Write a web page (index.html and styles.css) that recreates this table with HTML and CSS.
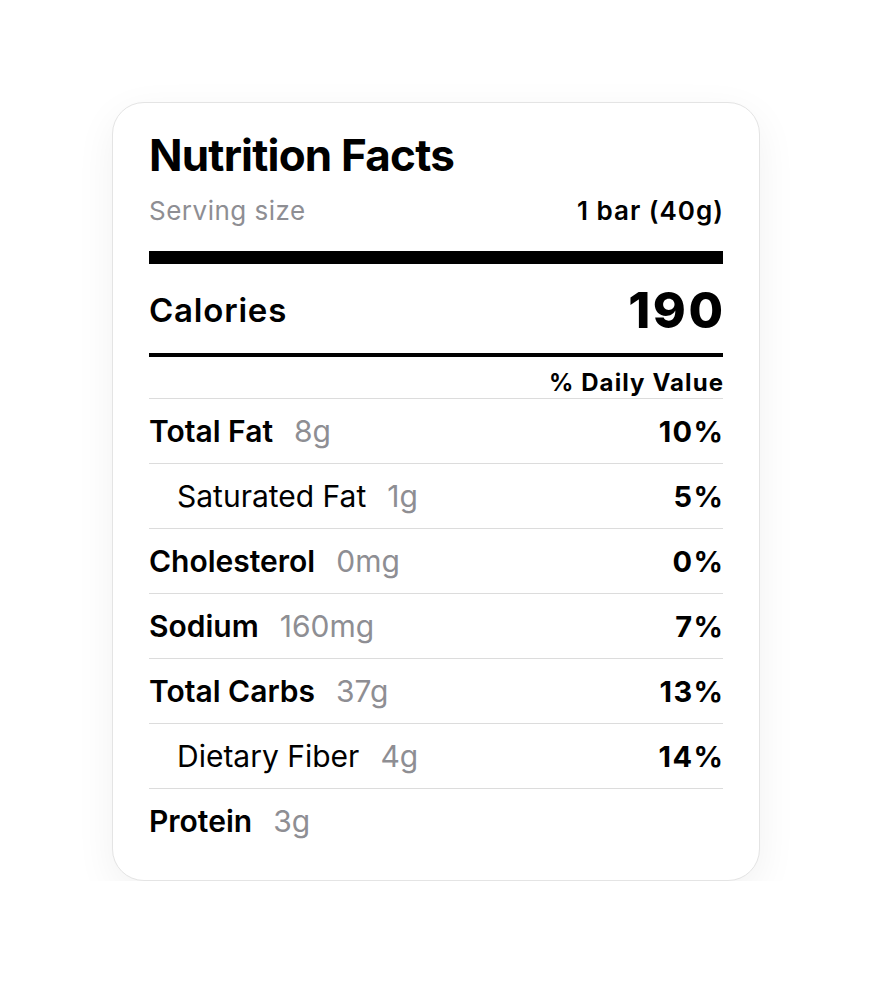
FILE: index.html
```html
<!DOCTYPE html>
<html lang="en">
<head>
<meta charset="utf-8">
<title>Nutrition Facts</title>
<link rel="stylesheet" href="styles.css">
</head>
<body>
<main class="page">
  <section class="card">
    <h1 class="title">Nutrition Facts</h1>
    <div class="serving">
      <span class="serving-label">Serving size</span>
      <span class="serving-value">1 bar (40g)</span>
    </div>
    <div class="bar-thick"></div>
    <div class="calories">
      <span class="calories-label">Calories</span>
      <span class="calories-value">190</span>
    </div>
    <div class="bar-medium"></div>
    <div class="dv-head"><span class="dv-text">% Daily Value</span></div>
    <ul class="rows">
      <li class="row"><span class="name">Total Fat</span><span class="amt">8g</span><span class="pct">10%</span></li>
      <li class="row sub"><span class="name">Saturated Fat</span><span class="amt">1g</span><span class="pct">5%</span></li>
      <li class="row"><span class="name">Cholesterol</span><span class="amt">0mg</span><span class="pct">0%</span></li>
      <li class="row"><span class="name">Sodium</span><span class="amt">160mg</span><span class="pct">7%</span></li>
      <li class="row"><span class="name">Total Carbs</span><span class="amt">37g</span><span class="pct">13%</span></li>
      <li class="row sub"><span class="name">Dietary Fiber</span><span class="amt">4g</span><span class="pct">14%</span></li>
      <li class="row"><span class="name">Protein</span><span class="amt">3g</span></li>
    </ul>
  </section>
</main>
</body>
</html>
```
FILE: styles.css
```css
* { box-sizing: border-box; }
html, body { margin: 0; padding: 0; background: #ffffff; }
body {
  font-family: Inter, "Noto Sans", "Liberation Sans", sans-serif;
  color: #000;
}
.page {
  display: flex;
  justify-content: center;
  padding-top: 102px;
  padding-right: 1px;
}
.card {
  width: 648px;
  background: #fff;
  border: 1px solid #e4e4e4;
  border-radius: 32px;
  box-shadow: 0 12px 40px rgba(0, 0, 0, 0.06);
  padding: 26px 36px 27px;
}
.title {
  margin: 0;
  font-size: 44px;
  line-height: 52px;
  font-weight: 700;
  letter-spacing: -0.8px;
}
.serving {
  display: flex;
  justify-content: space-between;
  align-items: baseline;
  margin-top: 15px;
  font-size: 26px;
  line-height: 30px;
}
.serving-label { color: #8e8e93; letter-spacing: 0.5px; }
.serving-value { font-weight: 600; letter-spacing: 1px; margin-right: -1px; }
.bar-thick {
  height: 13px;
  background: #000;
  margin-top: 25px;
}
.calories {
  display: flex;
  justify-content: space-between;
  align-items: center;
  padding: 21px 0 18px;
}
.calories-label {
  font-size: 33px;
  font-weight: 600;
  letter-spacing: 0.8px;
}
.calories-value {
  font-size: 50px;
  line-height: 50px;
  font-weight: 800;
  letter-spacing: 2.5px;
  margin-right: -2.5px;
}
.bar-medium {
  height: 4px;
  background: #000;
}
.dv-head {
  display: flex;
  justify-content: flex-end;
  font-size: 24px;
  line-height: 28px;
  font-weight: 700;
  padding: 12px 0 1px;
  border-bottom: 1px solid #dcdcdc;
}
.dv-text { letter-spacing: 1.1px; margin-right: -1.1px; }
.rows {
  list-style: none;
  margin: 0;
  padding: 0;
}
.row {
  display: flex;
  align-items: center;
  height: 65px;
  font-size: 30px;
  border-bottom: 1px solid #dcdcdc;
}
.row:last-child { border-bottom: none; height: 64px; }
.row.sub { padding-left: 28px; }
.name { font-weight: 600; }
.row.sub .name { font-weight: 400; }
.amt {
  margin-left: 21px;
  color: #8e8e93;
}
.pct {
  margin-left: auto;
  font-size: 29px;
  font-weight: 700;
  letter-spacing: 1.4px;
  margin-right: -1.4px;
}
```
